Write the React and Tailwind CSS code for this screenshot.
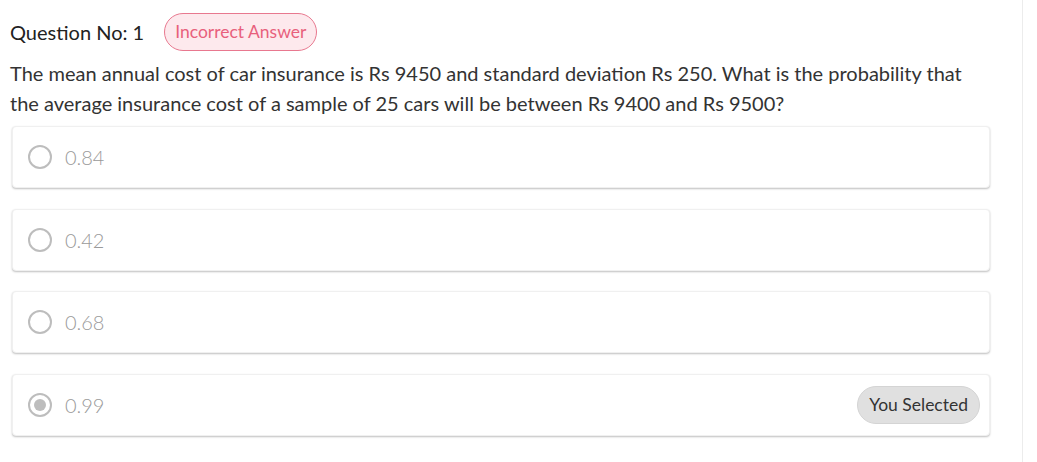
import React from "react";

const options = [
  { label: "0.84", selected: false },
  { label: "0.42", selected: false },
  { label: "0.68", selected: false },
  { label: "0.99", selected: true },
];

function Radio({ checked }) {
  return (
    <span className="flex h-[26px] w-[26px] items-center justify-center">
      <span className="flex h-[24px] w-[24px] items-center justify-center rounded-full border-2 border-[#bdbdbd]">
        {checked && <span className="block h-[12px] w-[12px] rounded-full bg-[#bdbdbd]" />}
      </span>
    </span>
  );
}

export default function App() {
  return (
    <div className="h-[462px] w-[1037px] bg-white" style={{ fontFamily: "Lato, 'Open Sans', sans-serif" }}>
      <div className="h-full w-[1023px] border-r border-[#ececec] pl-[10px] pr-[32px] pt-[13px]">
        <div className="flex items-center">
          <span className="text-[20px] text-[#222]">Question No: 1</span>
          <span className="ml-[20px] flex h-[38px] items-center rounded-full border border-[#e8788f] bg-[#fde9ed] px-[10px] text-[17.5px] text-[#e8607c]">
            Incorrect Answer
          </span>
        </div>
        <p className="mt-[7px] text-[20px] leading-[30px] text-[#333]">
          The mean annual cost of car insurance is Rs 9450 and standard deviation Rs 250. What is the probability that the average insurance cost of a sample of 25 cars will be between Rs 9400 and Rs 9500?
        </p>
        <div className="ml-[2px] mt-[8px] flex flex-col gap-[20.6px]">
          {options.map((o) => (
            <div
              key={o.label}
              className="flex h-[62px] items-center rounded-[4px] border border-[#f0f0f0] bg-white pl-[14px] pr-[9px] shadow-[0_1px_2px_rgba(0,0,0,0.25)]"
            >
              <Radio checked={o.selected} />
              <span className="ml-[12px] text-[20px] font-light text-[#9a9a9a]">{o.label}</span>
              {o.selected && (
                <span className="ml-auto flex h-[38px] items-center rounded-full border border-[#d4d4d4] bg-[#e0e0e0] px-[11px] text-[17.5px] text-[#333]">
                  You Selected
                </span>
              )}
            </div>
          ))}
        </div>
      </div>
    </div>
  );
}
